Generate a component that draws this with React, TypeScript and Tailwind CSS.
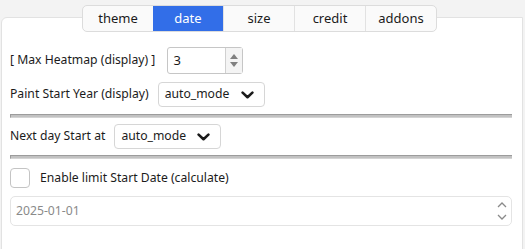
import React from "react";

const tabs = ["theme", "date", "size", "credit", "addons"];

const Chevron = () => (
  <svg width="13" height="8" viewBox="0 0 13 8" fill="none">
    <path d="M1.6 1.6 L6.5 6.2 L11.4 1.6" stroke="#1b1b1b" strokeWidth="2.6" strokeLinecap="round" strokeLinejoin="round" />
  </svg>
);

const Select = ({ width }: { width: string }) => (
  <div className={`flex items-center justify-between h-[25px] ${width} pl-[6px] pr-[10px] bg-white border border-[#d6d6d6] rounded-[4px]`}>
    <span>auto_mode</span>
    <Chevron />
  </div>
);

const Divider = () => (
  <div className="h-[4px] w-full border-t border-l border-[#9c9c9c] border-b border-b-[#d4d4d4] bg-[#c2c2c2]" />
);

export default function App() {
  return (
    <div
      className="w-[525px] h-[249px] bg-[#f3f3f3] overflow-hidden pt-[5px] text-[12.2px] text-[#1b1b1b]"
      style={{ fontFamily: '"Noto Sans", "Open Sans", sans-serif' }}
    >
      <div className="relative z-10 flex ml-[82px] w-[355px] h-[27px] rounded-[5px] border border-[#dcdcdc] bg-[#fafafa] overflow-hidden text-[13px]">
        {tabs.map((t, i) => (
          <div
            key={t}
            className={
              t === "date"
                ? "flex-1 flex items-center justify-center bg-[#326ee8] text-white"
                : `flex-1 flex items-center justify-center ${i > 0 ? "border-l border-[#e2e2e2]" : ""}`
            }
          >
            {t}
          </div>
        ))}
      </div>

      <div className="mt-[-15px] ml-[1px] w-[522px] h-[240px] bg-white border border-[#e2e2e2] rounded-tl-[6px] pt-[29px] pl-[8px] pr-[10px]">
        <div className="flex items-center h-[27px] gap-[12px]">
          <span>[ Max Heatmap (display) ]</span>
          <div className="flex h-[27px] w-[76px] border border-[#c6c6c6] rounded-[3px] bg-white">
            <div className="flex-1 flex items-center pl-[5px] text-[13px]">3</div>
            <div className="w-[17px] border-l border-[#d0d0d0] bg-[#f4f4f4] flex flex-col items-center justify-center gap-[3px]">
              <svg width="8" height="5" viewBox="0 0 8 5"><path d="M0 5 L4 0 L8 5 Z" fill="#808080" /></svg>
              <svg width="8" height="5" viewBox="0 0 8 5"><path d="M0 0 L4 5 L8 0 Z" fill="#808080" /></svg>
            </div>
          </div>
        </div>

        <div className="flex items-center mt-[8px] gap-[9px]">
          <span>Paint Start Year (display)</span>
          <Select width="w-[107px]" />
        </div>

        <div className="mt-[7px]">
          <Divider />
        </div>

        <div className="flex items-center mt-[6px] gap-[9px]">
          <span>Next day Start at</span>
          <Select width="w-[107px]" />
        </div>

        <div className="mt-[6px]">
          <Divider />
        </div>

        <div className="flex items-center mt-[9px] gap-[10px]">
          <div className="w-[20px] h-[20px] rounded-[4px] border border-[#c4c4c4] bg-white" />
          <span>Enable limit Start Date (calculate)</span>
        </div>

        <div className="flex items-center justify-between mt-[8px] h-[30px] border border-[#e4e4e4] rounded-[5px] pl-[5px] pr-[4px]">
          <span className="text-[#8a8a8a]">2025-01-01</span>
          <div className="flex flex-col gap-[6px]">
            <svg width="10" height="6" viewBox="0 0 10 6"><path d="M1 5 L5 1 L9 5" stroke="#8a8a8a" strokeWidth="1.3" fill="none" /></svg>
            <svg width="10" height="6" viewBox="0 0 10 6"><path d="M1 1 L5 5 L9 1" stroke="#8a8a8a" strokeWidth="1.3" fill="none" /></svg>
          </div>
        </div>
      </div>
    </div>
  );
}
